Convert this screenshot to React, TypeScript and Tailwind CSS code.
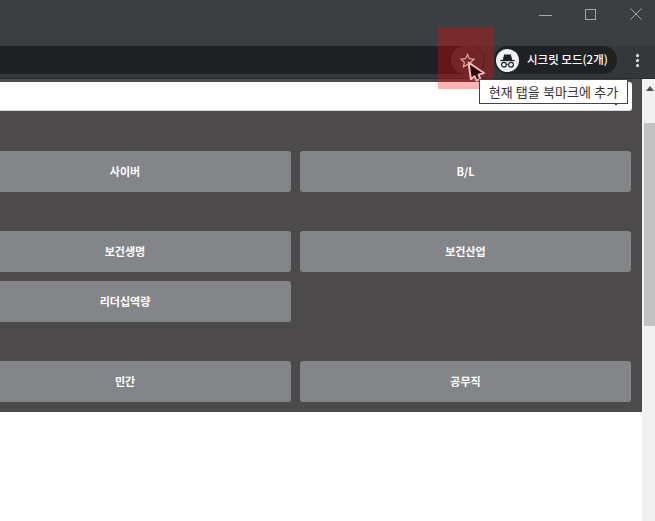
const font = { fontFamily: '"Noto Sans CJK KR", "Liberation Sans", sans-serif' };

function Tile({ label, empty }: { label?: string; empty?: boolean }) {
  if (empty) return <div className="h-[41px]" />;
  return (
    <div className="flex h-[41px] items-center justify-center rounded-[3px] bg-[#848589] text-[11px] font-bold text-white">
      {label}
    </div>
  );
}

function IncognitoIcon() {
  return (
    <svg width="23" height="23" viewBox="0 0 24 24">
      <circle cx="12" cy="12" r="12" fill="#f1f3f4" />
      <path d="M4.5 11.5h15v1.2h-15z" fill="#202124" />
      <path d="M7 11.5l1.5-5.8h7l1.5 5.8z" fill="#202124" />
      <circle cx="8.3" cy="16.4" r="2.5" fill="none" stroke="#202124" strokeWidth="1.2" />
      <circle cx="15.7" cy="16.4" r="2.5" fill="none" stroke="#202124" strokeWidth="1.2" />
      <path d="M10.8 16h2.4" stroke="#202124" strokeWidth="1" />
    </svg>
  );
}

function WindowButtons() {
  return (
    <div className="-mr-[4px] flex text-[#a5a8aa]">
      <div className="flex h-[28px] w-[46px] items-center justify-center">
        <svg width="13" height="13" viewBox="0 0 13 13">
          <path d="M0 7.5h13" stroke="currentColor" />
        </svg>
      </div>
      <div className="flex h-[28px] w-[45px] items-center justify-center">
        <svg width="11" height="11" viewBox="0 0 11 11">
          <rect x="0.5" y="0.5" width="10" height="10" fill="none" stroke="currentColor" />
        </svg>
      </div>
      <div className="flex h-[28px] w-[46px] items-center justify-center">
        <svg width="12" height="12" viewBox="0 0 12 12">
          <path d="M0.5 0.5l11 11M11.5 0.5l-11 11" stroke="currentColor" />
        </svg>
      </div>
    </div>
  );
}

export default function App() {
  return (
    <div className="relative h-[521px] w-[655px] overflow-hidden bg-white" style={font}>
      {/* title bar */}
      <div className="flex h-[46px] items-start justify-end bg-[#3b3f42]">
        <WindowButtons />
      </div>

      {/* toolbar */}
      <div className="flex h-[33px] items-start border-b border-[#2a2b2d] bg-[#35383a]">
        <div className="h-[28px] flex-1 rounded-r-[14px] bg-[#202124]" />
        <div className="ml-[9px] mr-[38px] flex h-[28px] w-[123px] items-center rounded-[14px] bg-[#202124]">
          <div className="ml-[2px] flex">
            <IncognitoIcon />
          </div>
          <span className="ml-[8px] whitespace-nowrap text-[11.5px] font-medium text-white">시크릿 모드(2개)</span>
        </div>
      </div>

      <div className="flex">
        <div className="w-[642px] overflow-hidden">
          <div className="bg-[#4d4a4b] pt-[3px]">
            <div className="relative mr-[10px] h-[29px] rounded-r-[3px] border-b border-[#d8d8d8] bg-white">
              <span className="absolute left-[615px] top-[21px] h-[2px] w-[2px] bg-[#333]" />
            </div>
            <div className="-ml-[41px] grid w-[672px] grid-cols-[332px_331px] gap-x-[9px] pb-[10px]">
              <div className="col-span-2 h-[40px]" />
              <Tile label="사이버" />
              <Tile label="B/L" />
              <div className="col-span-2 h-[39px]" />
              <Tile label="보건생명" />
              <Tile label="보건산업" />
              <div className="col-span-2 h-[9px]" />
              <Tile label="리더십역량" />
              <Tile empty />
              <div className="col-span-2 h-[39px]" />
              <Tile label="민간" />
              <Tile label="공무직" />
            </div>
          </div>
        </div>
        <div className="h-[442px] w-[13px] bg-[#f1f1f1]">
          <div className="ml-[4px] mt-[7px] h-0 w-0 border-x-[4px] border-b-[5px] border-x-transparent border-b-[#505050]" />
          <div className="ml-[2px] mt-[32px] h-[203px] bg-[#c1c1c1]" />
        </div>
      </div>

      {/* toolbar menu dots */}
      <div className="absolute left-[636px] top-[54px] flex flex-col gap-[2px]">
        <span className="size-[3px] rounded-full bg-white" />
        <span className="size-[3px] rounded-full bg-white" />
        <span className="size-[3px] rounded-full bg-white" />
      </div>

      {/* bookmark star with highlight */}
      <div className="absolute left-[451px] top-[46px] h-[28px] w-[33px] rounded-full bg-[#35363a]" />
      <div className="absolute left-[438px] top-[27px] h-[62px] w-[56px] bg-[#ff0000]/30" />
      <svg className="absolute left-[459px] top-[52px]" width="18" height="18" viewBox="0 0 18 18">
        <path d="M8.5 2.5l1.9 4.2 4.6.5-3.4 3.1 1 4.5-4.1-2.3-4.1 2.3 1-4.5L2 7.2l4.6-.5z" fill="none" stroke="#e8a0a0" strokeWidth="1.2" />
      </svg>
      <svg className="absolute left-[465px] top-[60px]" width="22" height="24" viewBox="0 0 22 24">
        <path d="M3.5 2.5l15.5 10.5-5.5 1.6 1.8 4.2-3.8 1.8-2-4.4-3.6 3z" fill="#2a0a0a" stroke="#f2b8b8" strokeWidth="2" strokeLinejoin="round" />
      </svg>

      {/* tooltip */}
      <div className="absolute left-[479px] top-[79px] flex h-[25px] w-[149px] items-center justify-center whitespace-nowrap border border-[#444] bg-white pt-[1px] text-[13px] tracking-[0.1px] text-[#333]">
        현재 탭을 북마크에 추가
      </div>
    </div>
  );
}
